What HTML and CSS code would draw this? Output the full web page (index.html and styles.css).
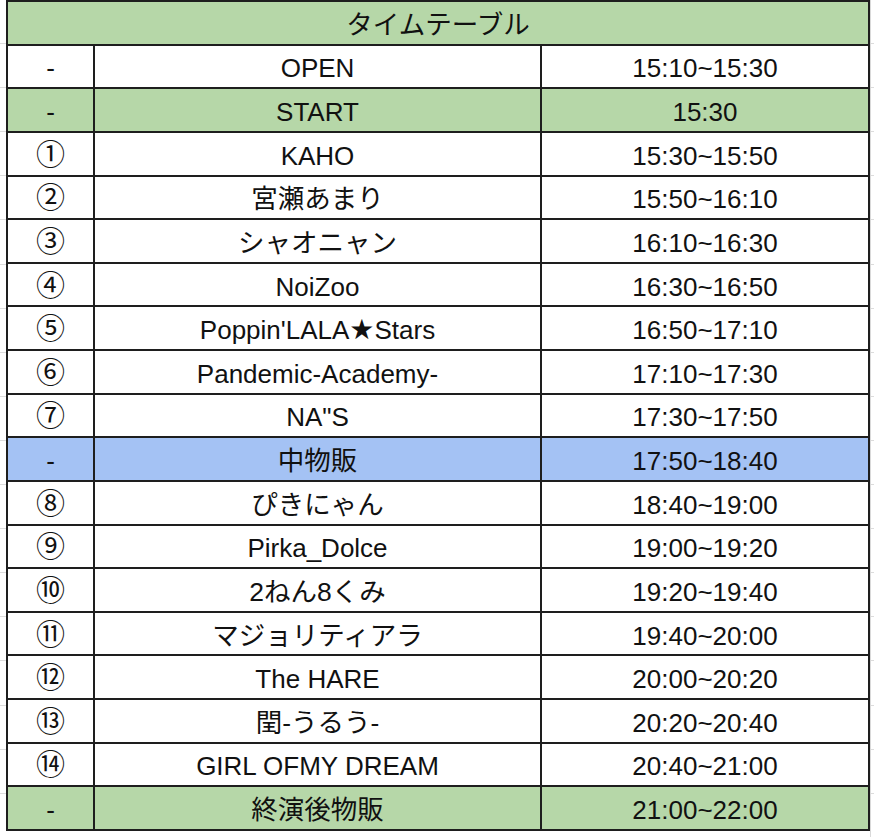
FILE: index.html
```html
<!DOCTYPE html>
<html lang="ja">
<head>
<meta charset="utf-8">
<title>タイムテーブル</title>
<link rel="stylesheet" href="styles.css">
</head>
<body>
<div class="sheet">
<table class="tt">
<colgroup><col class="c1"><col class="c2"><col class="c3"></colgroup>
<tr class="green"><td colspan="3" class="jp">タイムテーブル</td></tr>
<tr><td>-</td><td>OPEN</td><td>15:10~15:30</td></tr>
<tr class="green"><td>-</td><td>START</td><td>15:30</td></tr>
<tr><td class="num">①</td><td>KAHO</td><td>15:30~15:50</td></tr>
<tr><td class="num">②</td><td class="jp">宮瀬あまり</td><td>15:50~16:10</td></tr>
<tr><td class="num">③</td><td class="jp">シャオニャン</td><td>16:10~16:30</td></tr>
<tr><td class="num">④</td><td>NoiZoo</td><td>16:30~16:50</td></tr>
<tr><td class="num">⑤</td><td>Poppin'LALA<span class="sym">★</span>Stars</td><td>16:50~17:10</td></tr>
<tr><td class="num">⑥</td><td>Pandemic-Academy-</td><td>17:10~17:30</td></tr>
<tr><td class="num">⑦</td><td>NA"S</td><td>17:30~17:50</td></tr>
<tr class="blue"><td>-</td><td class="jp">中物販</td><td>17:50~18:40</td></tr>
<tr><td class="num">⑧</td><td class="jp">ぴきにゃん</td><td>18:40~19:00</td></tr>
<tr><td class="num">⑨</td><td>Pirka_Dolce</td><td>19:00~19:20</td></tr>
<tr><td class="num">⑩</td><td class="jp">2ねん8くみ</td><td>19:20~19:40</td></tr>
<tr><td class="num">⑪</td><td class="jp">マジョリティアラ</td><td>19:40~20:00</td></tr>
<tr><td class="num">⑫</td><td>The HARE</td><td>20:00~20:20</td></tr>
<tr><td class="num">⑬</td><td class="jp">閏-うるう-</td><td>20:20~20:40</td></tr>
<tr><td class="num">⑭</td><td>GIRL OFMY DREAM</td><td>20:40~21:00</td></tr>
<tr class="green"><td>-</td><td class="jp">終演後物販</td><td>21:00~22:00</td></tr>
</table>
</div>
</body>
</html>
```

FILE: styles.css
```css
html, body {
  margin: 0;
  padding: 0;
  background: #ffffff;
}
body {
  width: 874px;
  height: 837px;
  overflow: hidden;
  font-family: "Liberation Sans", "Noto Sans CJK JP", sans-serif;
  color: #111;
}
.sheet {
  height: 837px;
  background-image:
    linear-gradient(to right, transparent 870px, #d9d9d9 870px, #d9d9d9 871px, transparent 871px),
    repeating-linear-gradient(to bottom, transparent 0, transparent 43.1px, #dcdcdc 43.1px, #dcdcdc 44.1px);
}
.tt {
  margin-left: 6px;
  border-collapse: collapse;
  table-layout: fixed;
  width: 862px;
  background: #fff;
}
.c1 { width: 87px; }
.c2 { width: 447px; }
.c3 { width: 328px; }
.tt td {
  border: 2px solid #1e1e1e;
  height: 41.6px;
  padding: 4px 0 0 0;
  box-sizing: border-box;
  text-align: center;
  vertical-align: middle;
  font-size: 26px;
  line-height: 28px;
  white-space: nowrap;
  overflow: hidden;
}
.tt tr { height: 43.63px; }
.tt td.jp { font-size: 26.5px; }
.tt td.num { font-size: 29px; padding-top: 2px; }
.green td { background: #b6d7a8; }
.blue td { background: #a4c2f4; }
.sym { font-family: "DejaVu Sans", sans-serif; font-size: 28px; }
```
